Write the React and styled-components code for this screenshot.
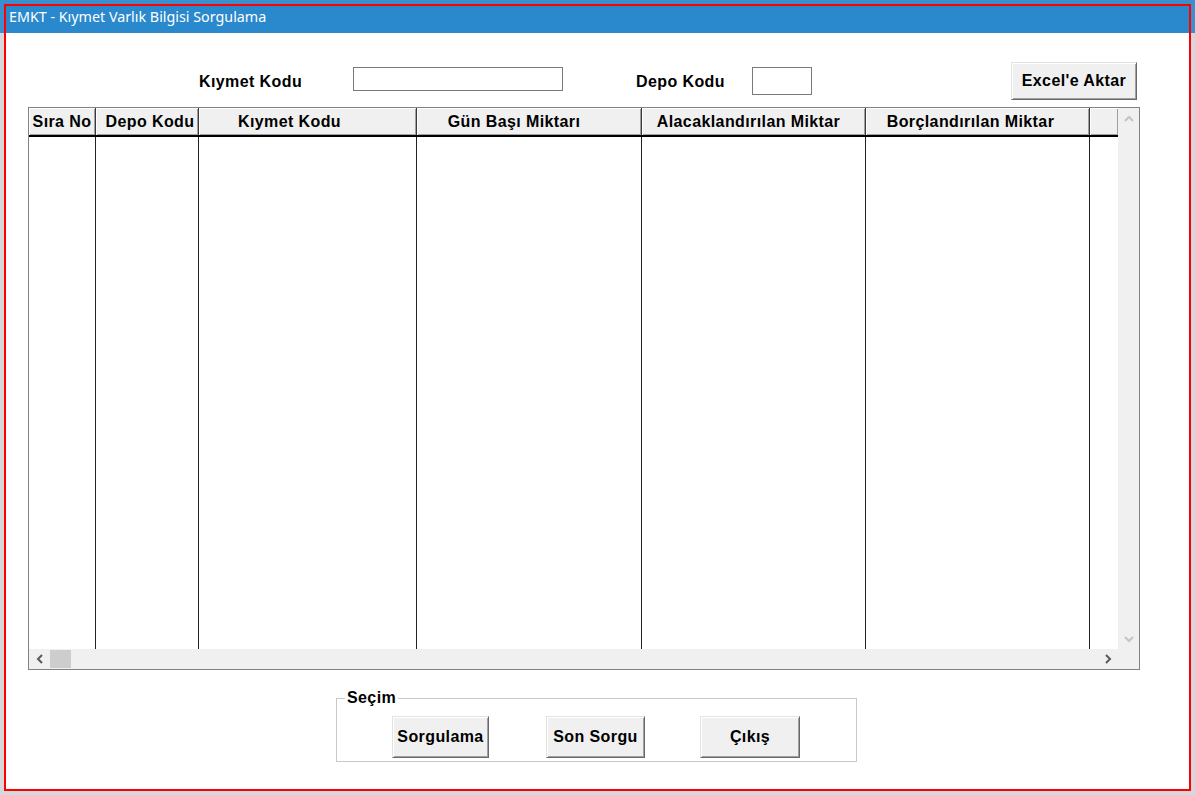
import React from "react";
import styled, { createGlobalStyle } from "styled-components";

const GlobalStyle = createGlobalStyle`
  html, body {
    margin: 0;
    padding: 0;
  }
  body {
    font-family: "Liberation Sans", Arial, sans-serif;
  }
`;

// shift = how far the caption sits off the centre of its column (px)
const columns = [
  { title: "Sıra No", width: 67, shift: 0 },
  { title: "Depo Kodu", width: 103, shift: 3 },
  { title: "Kıymet Kodu", width: 218, shift: -18 },
  { title: "Gün Başı Miktarı", width: 225, shift: -15 },
  { title: "Alacaklandırılan Miktar", width: 224, shift: -5 },
  { title: "Borçlandırılan Miktar", width: 224, shift: -7 },
  { title: "", width: 28, shift: 0 },
];
const template = columns.map((c) => `${c.width}px`).join(" ");

const Chevron = ({ dir, color }) => {
  const paths = {
    up: "M1 6 L5 2 L9 6",
    down: "M1 2 L5 6 L9 2",
    left: "M6 1 L2 5 L6 9",
    right: "M2 1 L6 5 L2 9",
  };
  const vertical = dir === "up" || dir === "down";
  return (
    <svg
      width={vertical ? 10 : 8}
      height={vertical ? 8 : 10}
      viewBox={vertical ? "0 0 10 8" : "0 0 8 10"}
    >
      <path d={paths[dir]} fill="none" stroke={color} strokeWidth="2" />
    </svg>
  );
};

const App = () => {
  return (
    <>
      <GlobalStyle />
      <Screen>
        <Window>
          <TitleBar>EMKT - Kıymet Varlık Bilgisi Sorgulama</TitleBar>
          <Content>
            <Toolbar>
              <Label $w={154}>Kıymet Kodu</Label>
              <TextBox $w={210} $h={24} />
              <Label $w={116} $ml={73}>
                Depo Kodu
              </Label>
              <TextBox $w={60} $h={28} />
              <Button $w={126} $h={38} $ml={199}>
                Excel'e Aktar
              </Button>
            </Toolbar>

            <Grid>
              <GridMain>
                <GridTable>
                  <HeaderRow>
                    {columns.map((c, i) => (
                      <HeaderCell key={i} $shift={c.shift}>
                        {c.title}
                      </HeaderCell>
                    ))}
                  </HeaderRow>
                  <BodyRow>
                    {columns.map((c, i) => (
                      <BodyCell key={i} $last={i === columns.length - 1} />
                    ))}
                  </BodyRow>
                </GridTable>
                <VScroll>
                  <Chevron dir="up" color="#c4c4c4" />
                  <Chevron dir="down" color="#c4c4c4" />
                </VScroll>
              </GridMain>
              <HScrollRow>
                <HScroll>
                  <ArrowBox>
                    <Chevron dir="left" color="#5a5a5a" />
                  </ArrowBox>
                  <Thumb />
                  <ArrowBox $right>
                    <Chevron dir="right" color="#5a5a5a" />
                  </ArrowBox>
                </HScroll>
                <Corner />
              </HScrollRow>
            </Grid>

            <GroupBox>
              <Legend>Seçim</Legend>
              <ButtonRow>
                <Button $w={97} $h={42}>
                  Sorgulama
                </Button>
                <Button $w={99} $h={42} $ml={57}>
                  Son Sorgu
                </Button>
                <Button $w={100} $h={42} $ml={55}>
                  Çıkış
                </Button>
              </ButtonRow>
            </GroupBox>
          </Content>
        </Window>
      </Screen>
    </>
  );
};

const Screen = styled.div`
  width: 1195px;
  height: 795px;
  box-sizing: border-box;
  padding: 4px 0 0 4px;
  background: linear-gradient(#3a90cf 0 33px, #d6d8db 33px);
  overflow: hidden;
`;

const Window = styled.div`
  width: 1187px;
  height: 787px;
  box-sizing: border-box;
  border: 2px solid #ff0000;
  background: #ffffff;
  display: flex;
  flex-direction: column;
`;

const TitleBar = styled.div`
  height: 27px;
  flex-shrink: 0;
  background: #2a88cc;
  color: #ffffff;
  font-family: "Noto Sans", "Open Sans", sans-serif;
  font-size: 14.3px;
  line-height: 22px;
  padding-left: 3px;
  white-space: nowrap;
`;

const Content = styled.div`
  display: flex;
  flex-direction: column;
  padding: 29px 0 0 22px;
`;

const Toolbar = styled.div`
  display: flex;
  align-items: center;
  height: 38px;
  padding-left: 171px;
`;

const Label = styled.span`
  width: ${(p) => p.$w}px;
  margin-left: ${(p) => p.$ml || 0}px;
  font-size: 16px;
  font-weight: bold;
  letter-spacing: 0.4px;
  color: #000;
  white-space: nowrap;
  position: relative;
  top: 1px;
`;

const TextBox = styled.div`
  width: ${(p) => p.$w}px;
  height: ${(p) => p.$h}px;
  box-sizing: border-box;
  border: 1px solid #7a7a7a;
  background: #fff;
  align-self: flex-start;
  margin-top: 5px;
`;

const Button = styled.button`
  width: ${(p) => p.$w}px;
  height: ${(p) => p.$h}px;
  margin-left: ${(p) => p.$ml || 0}px;
  box-sizing: border-box;
  padding: 0;
  background: #f0f0f0;
  border: 1px solid;
  border-color: #e3e3e3 #696969 #696969 #e3e3e3;
  box-shadow: inset 1px 1px #ffffff, inset -1px -1px #a0a0a0;
  font-family: "Liberation Sans", Arial, sans-serif;
  font-size: 16px;
  font-weight: bold;
  letter-spacing: 0.4px;
  color: #000;
  white-space: nowrap;
`;

const Grid = styled.div`
  margin-top: 7px;
  width: 1112px;
  height: 563px;
  box-sizing: border-box;
  border: 1px solid #828282;
  display: flex;
  flex-direction: column;
`;

const GridMain = styled.div`
  flex: 1;
  display: flex;
  min-height: 0;
`;

const GridTable = styled.div`
  width: 1089px;
  display: flex;
  flex-direction: column;
  background: #fff;
`;

const HeaderRow = styled.div`
  display: grid;
  grid-template-columns: ${template};
  height: 29px;
  box-sizing: border-box;
  border-bottom: 2px solid #000;
`;

const HeaderCell = styled.div`
  background: #f0f0f0;
  box-shadow: inset 1px 1px #ffffff, inset -1px -1px #a0a0a0;
  border-right: 1px solid #3a3a3a;
  font-size: 16px;
  font-weight: bold;
  letter-spacing: 0.4px;
  color: #000;
  text-align: center;
  line-height: 27px;
  white-space: nowrap;
  overflow: hidden;
  padding-left: ${(p) => Math.max(0, p.$shift * 2)}px;
  padding-right: ${(p) => Math.max(0, -p.$shift * 2)}px;
  &:last-child {
    border-right: none;
  }
`;

const BodyRow = styled.div`
  flex: 1;
  display: grid;
  grid-template-columns: ${template};
`;

const BodyCell = styled.div`
  border-right: ${(p) => (p.$last ? "none" : "1px solid #222")};
`;

const VScroll = styled.div`
  width: 21px;
  background: #f0f0f0;
  display: flex;
  flex-direction: column;
  align-items: center;
  justify-content: space-between;
  padding: 7px 0 6px;
  box-sizing: border-box;
`;

const HScrollRow = styled.div`
  display: flex;
  height: 20px;
`;

const HScroll = styled.div`
  width: 1089px;
  background: #f0f0f0;
  display: flex;
  align-items: stretch;
`;

const ArrowBox = styled.div`
  width: 21px;
  display: flex;
  align-items: center;
  justify-content: center;
  margin-left: ${(p) => (p.$right ? "auto" : "0")};
`;

const Thumb = styled.div`
  width: 21px;
  background: #cdcdcd;
  margin: 1px 0 1px 0;
`;

const Corner = styled.div`
  flex: 1;
  background: #f0f0f0;
`;

const GroupBox = styled.fieldset`
  margin: 20px 0 0 308px;
  width: 521px;
  box-sizing: border-box;
  padding: 10px 0 3px 8px;
  border: 1px solid #c8c8c8;
`;

const Legend = styled.legend`
  padding: 0 2px;
  font-size: 16px;
  font-weight: bold;
  letter-spacing: 0.4px;
  line-height: 16px;
  color: #000;
`;

const ButtonRow = styled.div`
  display: flex;
  padding-left: 47px;
`;

export default App;
